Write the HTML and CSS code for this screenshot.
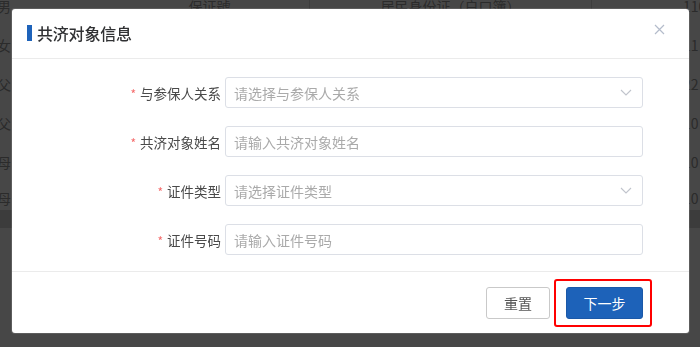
FILE: index.html
```html
<!DOCTYPE html>
<html lang="zh-CN">
<head>
<meta charset="utf-8">
<title>共济对象信息</title>
<link rel="stylesheet" href="styles.css">
</head>
<body>
<div class="page">
  <div class="trow first">
    <div class="c1">男</div><div class="c2">保证號</div><div class="c3">居民身份证（户口簿）</div><div class="c4">11010</div>
  </div>
  <div class="trow"><div class="c1">女</div><div class="c2"></div><div class="c3"></div><div class="c4">11</div></div>
  <div class="trow"><div class="c1">父</div><div class="c2"></div><div class="c3"></div><div class="c4">22</div></div>
  <div class="trow"><div class="c1">父</div><div class="c2"></div><div class="c3"></div><div class="c4">10</div></div>
  <div class="trow"><div class="c1">母</div><div class="c2"></div><div class="c3"></div><div class="c4">10</div></div>
  <div class="trow last"><div class="c1">母</div><div class="c2"></div><div class="c3"></div><div class="c4">10</div></div>
  <div class="band"></div>
</div>

<div class="overlay"></div>

<div class="dialog">
  <div class="dlg-head">
    <div class="dlg-title"><span class="bar"></span>共济对象信息</div>
    <span class="close">
      <svg width="11" height="11" viewBox="0 0 11 11"><path d="M1 1 L10 10 M10 1 L1 10" stroke="#b4bccb" stroke-width="1.2" fill="none"/></svg>
    </span>
  </div>
  <div class="dlg-body">
    <div class="frow">
      <label class="flabel"><span class="req">*</span>与参保人关系</label>
      <div class="finput select"><span class="ph">请选择与参保人关系</span>
        <svg class="chev" width="12" height="7" viewBox="0 0 12 7"><path d="M1 1 L6 6 L11 1" stroke="#c0c4cc" stroke-width="1.1" fill="none"/></svg>
      </div>
    </div>
    <div class="frow">
      <label class="flabel"><span class="req">*</span>共济对象姓名</label>
      <div class="finput"><span class="ph">请输入共济对象姓名</span></div>
    </div>
    <div class="frow">
      <label class="flabel"><span class="req">*</span>证件类型</label>
      <div class="finput select"><span class="ph">请选择证件类型</span>
        <svg class="chev" width="12" height="7" viewBox="0 0 12 7"><path d="M1 1 L6 6 L11 1" stroke="#c0c4cc" stroke-width="1.1" fill="none"/></svg>
      </div>
    </div>
    <div class="frow">
      <label class="flabel"><span class="req">*</span>证件号码</label>
      <div class="finput"><span class="ph">请输入证件号码</span></div>
    </div>
  </div>
  <div class="dlg-foot">
    <button class="btn btn-reset">重置</button>
    <span class="mark"><button class="btn btn-next">下一步</button></span>
  </div>
</div>
</body>
</html>
```

FILE: styles.css
```css
* { box-sizing: border-box; }
html, body { margin: 0; padding: 0; }
body {
  width: 700px;
  height: 347px;
  overflow: hidden;
  background: #fff;
  font-family: "Noto Sans CJK SC", "Noto Sans", sans-serif;
}
.page {
  margin-top: -14px;
  color: #999;
  font-size: 14px;
}
.trow {
  display: grid;
  grid-template-columns: 110px 200px 282px 120px;
  height: 39px;
  align-items: center;
}
.trow.last { height: 29px; align-items: start; padding-top: 7px; }
.trow.first .c2, .trow.first .c3 { border-right: 1px solid #dcdcdc; height: 100%; display: flex; align-items: center; justify-content: center; }
.c1 { margin-left: -3px; }
.c2, .c3 { text-align: center; }
.c4 { padding-left: 91px; white-space: nowrap; }
.band { height: 18px; background: #d8d8d8; }

.overlay {
  position: fixed;
  inset: 0;
  background: rgba(0, 0, 0, 0.72);
}

.dialog {
  position: absolute;
  left: 12px;
  top: 9px;
  width: 677px;
  height: 324px;
  background: #fff;
  border-radius: 3px;
  box-shadow: 0 0 0 1px rgba(255,255,255,0.12);
}
.dlg-head {
  height: 50px;
  border-bottom: 1px solid #ebebeb;
  display: flex;
  align-items: center;
  justify-content: space-between;
  padding: 0 24px 1px 15px;
}
.dlg-title {
  display: flex;
  align-items: center;
  font-size: 16px;
  font-weight: 500;
  color: #303133;
  letter-spacing: -0.2px;
}
.bar {
  width: 5px;
  height: 16px;
  background: #1e63ba;
  margin-right: 5px;
}
.close { display: flex; margin-top: -8px; }

.dlg-body {
  padding: 18px 0 16px;
  display: flex;
  flex-direction: column;
  gap: 18px;
}
.frow {
  display: grid;
  grid-template-columns: 213px 418px;
  align-items: center;
}
.flabel {
  text-align: right;
  padding-right: 4px;
  font-size: 13.5px;
  color: #4a4a4a;
  white-space: nowrap;
}
.req {
  color: #f56c6c;
  margin-right: 4px;
  font-size: 12px;
}
.finput {
  height: 31px;
  border: 1px solid #dcdfe6;
  border-radius: 3px;
  padding: 0 10px 0 8px;
  display: flex;
  align-items: center;
  justify-content: space-between;
}
.ph {
  font-size: 14px;
  color: #aaa;
}

.dlg-foot {
  border-top: 1px solid #ebebeb;
  padding: 15px 46px 14px 0;
  display: flex;
  justify-content: flex-end;
  align-items: center;
  gap: 16px;
}
.btn {
  font-family: inherit;
  font-size: 14px;
  height: 32px;
  border-radius: 3px;
  cursor: pointer;
}
.btn-reset {
  width: 64px;
  background: #fff;
  border: 1px solid #c9c9c9;
  color: #555;
}
.btn-next {
  width: 77px;
  background: #1d62b9;
  border: 1px solid #1a58a8;
  color: #fff;
  display: block;
}
.mark {
  position: relative;
  display: block;
}
.mark::after {
  content: "";
  position: absolute;
  top: -8px;
  bottom: -8px;
  left: -12px;
  right: -9px;
  border: 2px solid #ff0000;
  border-radius: 3px;
}
```
